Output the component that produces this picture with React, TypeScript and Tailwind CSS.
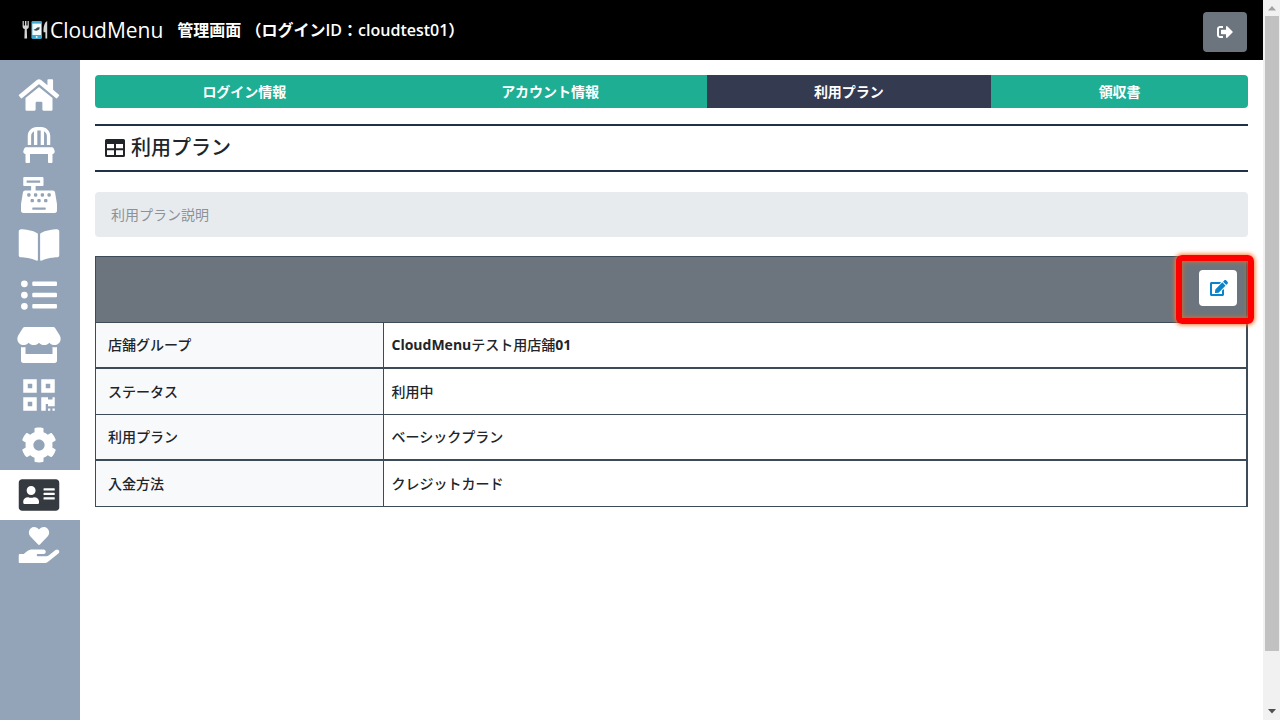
import type { ReactNode } from 'react'
import {
  FaAddressCard,
  FaBookOpen,
  FaCashRegister,
  FaChair,
  FaCog,
  FaEdit,
  FaHandHoldingHeart,
  FaHome,
  FaListUl,
  FaQrcode,
  FaSignOutAlt,
  FaStore,
} from 'react-icons/fa'

const navItems = [
  { label: 'ホーム', Icon: FaHome },
  { label: '座席', Icon: FaChair },
  { label: 'レジ', Icon: FaCashRegister },
  { label: 'メニューブック', Icon: FaBookOpen },
  { label: '一覧', Icon: FaListUl },
  { label: '店舗', Icon: FaStore },
  { label: 'QRコード', Icon: FaQrcode },
  { label: '設定', Icon: FaCog },
  { label: 'アカウント', Icon: FaAddressCard, active: true },
  { label: 'サポート', Icon: FaHandHoldingHeart },
]

const tabs = [
  { label: 'ログイン情報' },
  { label: 'アカウント情報' },
  { label: '利用プラン', active: true },
  { label: '領収書' },
]

const planRows: { label: string; value: ReactNode }[] = [
  {
    label: '店舗グループ',
    value: (
      <>
        <b>CloudMenu</b>テスト用店舗<b>01</b>
      </>
    ),
  },
  { label: 'ステータス', value: '利用中' },
  { label: '利用プラン', value: 'ベーシックプラン' },
  { label: '入金方法', value: 'クレジットカード' },
]

function LogoMark() {
  return (
    <svg viewBox="0 0 28 20" className="h-5 w-7" aria-hidden="true">
      {/* fork */}
      <path
        d="M.6 1h1.2v4.6h1.2V1h1.4v4.6h1.2V1h1.2v5.6c0 1.5-.8 2.2-2 2.5l.3 9.4H2.4l.3-9.4C1.4 8.8.6 8.1.6 6.6z"
        fill="#d4d4d4"
      />
      {/* phone */}
      <rect x="9.4" y="1" width="10.6" height="18" rx="1.4" fill="#3fa9d0" />
      <rect x="10.4" y="3.6" width="8.6" height="11.4" fill="#f3fafc" />
      <path d="M11.4 9.8c.8-.8 1.8-.6 2.6-1.4 1-1 2.200-1.200 3.800-1l-.6 2.200c-1.600 1.400-3.800 1.600-5.800.2z" fill="#3b4a52" />
      <circle cx="14.7" cy="17" r="1" fill="#e8f6fb" />
      {/* knife */}
      <path d="M25.2 1v17.6h-1.8v-6.4h-1.8C21.2 7 22.4 2.4 25.2 1z" fill="#d4d4d4" />
    </svg>
  )
}

function TableIcon() {
  return (
    <svg viewBox="0 0 20 18" className="h-[18px] w-5" aria-hidden="true">
      <path
        fillRule="evenodd"
        fill="#212529"
        d="M1.5 0h17A1.5 1.5 0 0 1 20 1.5v15a1.5 1.5 0 0 1-1.5 1.5h-17A1.5 1.5 0 0 1 0 16.5v-15A1.5 1.5 0 0 1 1.5 0zM2 5v4.200h7V5zM11 5v4.200h7V5zM2 11.200V16h7v-4.800zM11 11.200V16h7v-4.800z"
      />
    </svg>
  )
}

function Header() {
  return (
    <header className="flex h-[60px] shrink-0 items-center bg-black pr-4 pl-[22px] text-white">
      <a href="#" className="flex items-center font-['Open_Sans'] text-[21px] leading-none">
        <LogoMark />
        CloudMenu
      </a>
      <h1 className="ml-[14px] text-base font-semibold">管理画面 （ログインID：cloudtest01）</h1>
      <button
        type="button"
        aria-label="ログアウト"
        className="mt-1 ml-auto flex h-10 w-11 items-center justify-center rounded bg-[#6c757d]"
      >
        <FaSignOutAlt size={16} />
      </button>
    </header>
  )
}

function Sidebar() {
  return (
    <nav className="w-20 shrink-0 bg-[#93a4b8] pt-[10px]">
      {navItems.map(({ label, Icon, active }) => (
        <a
          key={label}
          href="#"
          aria-label={label}
          className={`flex h-[50px] items-center justify-center pr-[3px] ${
            active ? 'bg-white text-[#343a40]' : 'text-white'
          }`}
        >
          <Icon className="h-9 w-11" />
        </a>
      ))}
    </nav>
  )
}

function Tabs() {
  return (
    <div className="flex h-[33px] overflow-hidden rounded text-sm font-bold text-white">
      {tabs.map((tab) => (
        <button
          key={tab.label}
          type="button"
          className={`flex-auto ${tab.active ? 'bg-[#343a4f]' : 'bg-[#1eae94]'}`}
        >
          {tab.label}
        </button>
      ))}
    </div>
  )
}

function PlanTable() {
  return (
    <table className="mt-[19px] w-full table-fixed border-separate border-spacing-0 border border-r-2 border-b-0 border-[#3d4a57] text-sm font-medium">
      <colgroup>
        <col className="w-1/4" />
        <col />
      </colgroup>
      <thead>
        <tr>
          <td colSpan={2} className="relative h-[66px] border-b border-[#3d4a57] bg-[#6c757d] pr-[9px]">
            <button
              type="button"
              aria-label="編集"
              className="mb-1 ml-auto flex h-9 w-[38px] items-center justify-center rounded bg-white pl-[2px] text-[#0b83c9]"
            >
              <FaEdit size={18} />
            </button>
            <span className="pointer-events-none absolute -top-[2px] -right-[8px] h-[69px] w-[78px] rounded-md border-6 border-[#ff0000] shadow-[0_0_4px_1px_#ff7a33,inset_0_0_4px_1px_#c8703a]" />
          </td>
        </tr>
      </thead>
      <tbody>
        {planRows.map((row) => (
          <tr key={row.label} className="group">
            <th
              scope="row"
              className="h-[46px] border-r border-b border-[#3d4a57] bg-[#f8f9fb] px-3 text-left font-medium group-odd:border-b-2"
            >
              {row.label}
            </th>
            <td className="border-b border-[#3d4a57] px-2 group-odd:border-b-2">{row.value}</td>
          </tr>
        ))}
      </tbody>
    </table>
  )
}

function ScrollRail() {
  return (
    <div className="flex w-[17px] shrink-0 flex-col bg-[#f1f1f1] pr-px pl-[2px]" aria-hidden="true">
      <svg viewBox="0 0 14 16" className="h-4 w-full shrink-0">
        <path d="M7 6l4 4.5H3z" fill="#a3a3a3" />
      </svg>
      <div className="grow-[635] bg-[#c1c1c1]" />
      <div className="grow-[53]" />
      <svg viewBox="0 0 14 16" className="h-4 w-full shrink-0">
        <path d="M7 9.5L3 5h8z" fill="#505050" />
      </svg>
    </div>
  )
}

export default function App() {
  return (
    <div className="flex h-screen bg-white font-['Open_Sans','Noto_Sans_CJK_JP',sans-serif] text-[#212529]">
      <div className="flex min-w-0 flex-1 flex-col">
        <Header />
        <div className="flex min-h-0 flex-1">
          <Sidebar />
          <main className="min-w-0 flex-1 px-[15px] pt-[15px]">
            <Tabs />
            <h2 className="mt-4 flex h-12 items-center gap-[6px] border-y-2 border-[#22304a] px-[10px] text-xl font-medium">
              <TableIcon />
              利用プラン
            </h2>
            <p className="mt-5 flex h-[45px] items-center rounded bg-[#e8ebee] px-4 text-sm text-[#8b9299]">
              利用プラン説明
            </p>
            <PlanTable />
          </main>
        </div>
      </div>
      <ScrollRail />
    </div>
  )
}
